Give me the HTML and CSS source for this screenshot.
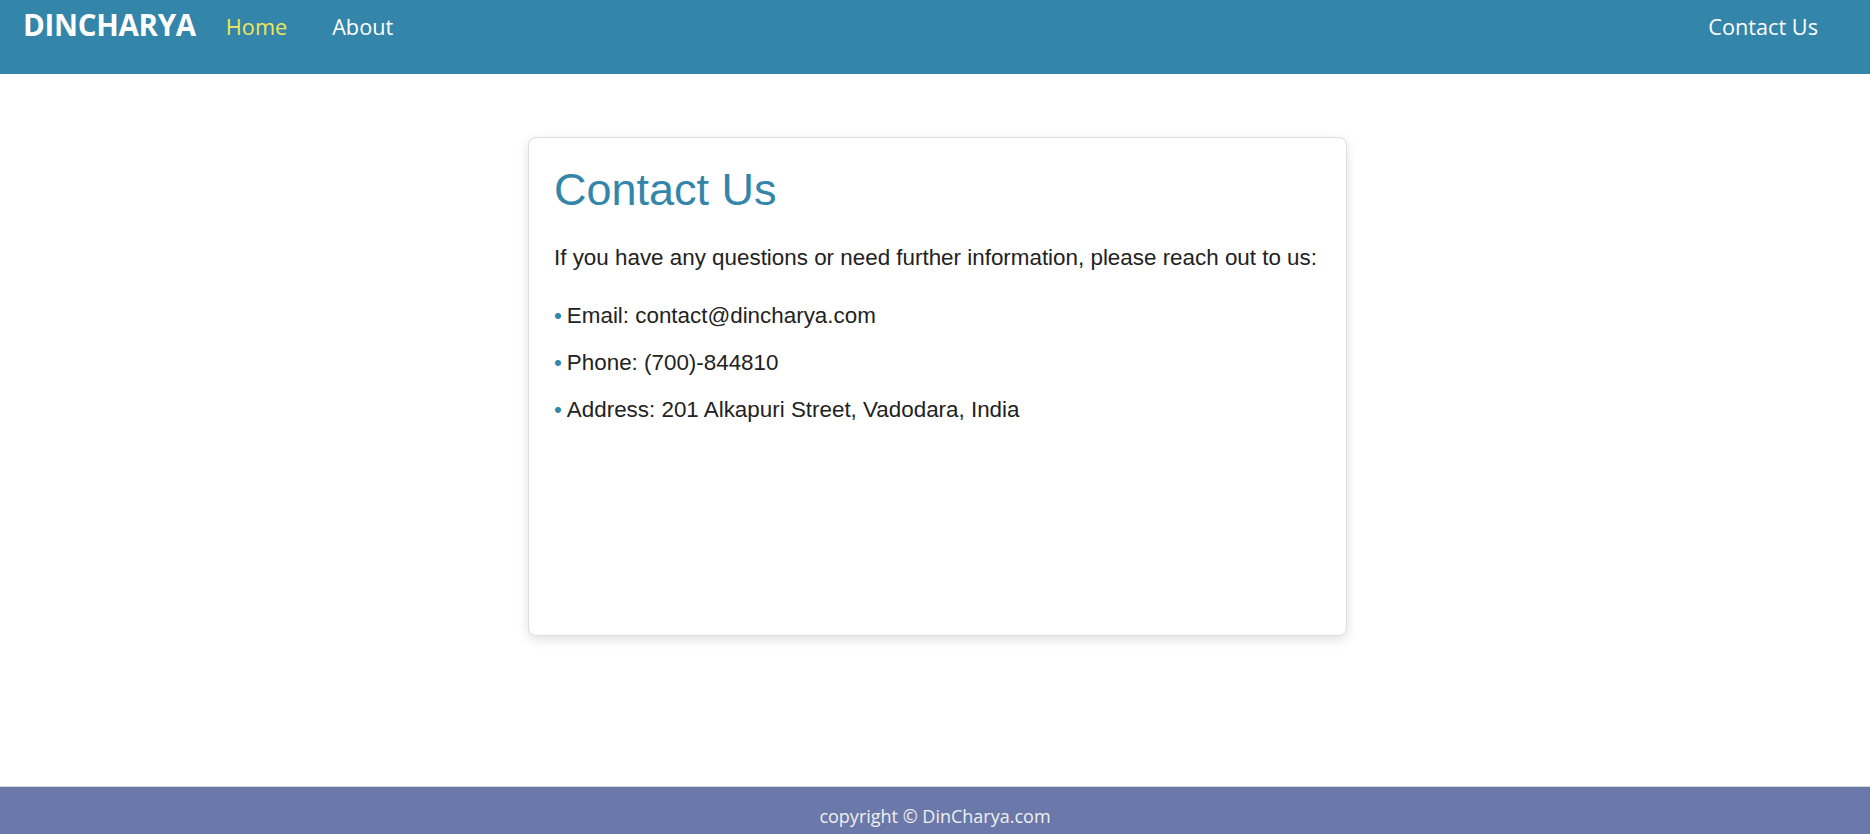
FILE: index.html
```html
<!DOCTYPE html>
<html lang="en">
<head>
<meta charset="utf-8">
<title>Contact Us - DinCharya</title>
<link rel="stylesheet" href="styles.css">
</head>
<body>
<header class="navbar">
  <div class="nav-left">
    <a class="brand" href="#">DINCHARYA</a>
    <a class="nav-link active" href="#">Home</a>
    <a class="nav-link" href="#">About</a>
  </div>
  <a class="nav-link" href="#">Contact Us</a>
</header>
<main class="main">
  <section class="card">
    <h1 class="card-title">Contact Us</h1>
    <p class="card-text">If you have any questions or need further information, please reach out to us:</p>
    <ul class="contact-list">
      <li>Email: contact@dincharya.com</li>
      <li>Phone: (700)-844810</li>
      <li>Address: 201 Alkapuri Street, Vadodara, India</li>
    </ul>
  </section>
</main>
<footer class="footer">
  <p>copyright © DinCharya.com</p>
</footer>
</body>
</html>
```

FILE: styles.css
```css
* { box-sizing: border-box; }
html, body { margin: 0; padding: 0; }
body {
  font-family: "Liberation Sans", Arial, sans-serif;
  background: #ffffff;
  color: #222222;
}
a { text-decoration: none; }

.navbar {
  height: 74px;
  background: #3385aa;
  display: flex;
  justify-content: space-between;
  align-items: flex-start;
  padding: 5px 52px 0 23px;
  font-family: "Open Sans", "Noto Sans", sans-serif;
}
.nav-left {
  display: flex;
  align-items: flex-start;
}
.brand {
  color: #ffffff;
  font-weight: 700;
  font-size: 29.5px;
  letter-spacing: -0.3px;
  line-height: 40px;
  margin-right: 30px;
}
.nav-link {
  color: #ffffff;
  font-size: 21.7px;
  line-height: 40px;
  margin-top: 2px;
  margin-right: 45px;
}
.navbar > .nav-link { margin-right: 0; }
.nav-link.active { color: #f2e65a; }

.main {
  padding: 63px 0 150px 5px;
}
.card {
  width: 819px;
  height: 499px;
  margin: 0 auto;
  background: #ffffff;
  border: 1px solid #dddddd;
  border-radius: 8px;
  box-shadow: 0 4px 12px rgba(0, 0, 0, 0.12);
  padding: 25px;
}
.card-title {
  margin: 1px 0 29px;
  font-size: 45px;
  font-weight: 400;
  color: #3385aa;
}
.card-text {
  margin: 0;
  font-size: 22.4px;
  color: #222222;
}
.contact-list {
  list-style: none;
  margin: 32px 0 0;
  padding: 0;
  font-size: 22.4px;
}
.contact-list li {
  margin-bottom: 21px;
  display: flex;
  align-items: baseline;
}
.contact-list li::before {
  content: "•";
  color: #3385aa;
  margin-right: 5px;
}

.footer {
  background: #6b78aa;
  border-top: 1px solid #d8d8d8;
  padding: 17px 0 20px;
  text-align: center;
  font-family: "Open Sans", "Noto Sans", sans-serif;
  color: #f0f0f0;
}
.footer p {
  margin: 0;
  font-size: 18px;
}
```
